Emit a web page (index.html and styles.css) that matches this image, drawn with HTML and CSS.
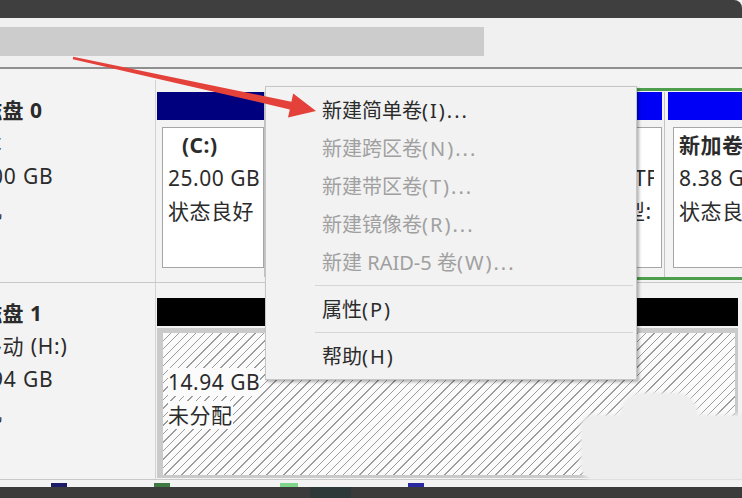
FILE: index.html
```html
<!DOCTYPE html>
<html>
<head>
    <meta charset="UTF-8">
    <title>磁盘管理</title>
    <link rel="stylesheet" href="styles.css">
</head>
<body>
    <div class="titlebar"></div>
    <div class="toolbar">
        <div class="search"></div>
    </div>

    <div class="disks">
        <!-- 磁盘 0 -->
        <div class="disk first">
            <div class="label">
                <div class="name">磁盘 0</div>
                <div>基本</div>
                <div>50.00 GB</div>
                <div>联机</div>
            </div>
            <div class="parts">
                <div class="part primary c">
                    <div class="bar"></div>
                    <div class="body">
                        <div class="inner">
                            <div class="name vol">(C:)</div>
                            <div>25.00 GB NTFS</div>
                            <div>状态良好</div>
                        </div>
                    </div>
                </div>
                <div class="part primary b">
                    <div class="bar"></div>
                    <div class="body">
                        <div class="inner"></div>
                    </div>
                </div>
                <div class="ext">
                    <div class="part logical d">
                        <div class="bar"></div>
                        <div class="body">
                            <div class="inner">
                                <div class="name">&nbsp;</div>
                                <div>9.50 GB NTFS</div>
                                <div>主分区 类型:</div>
                            </div>
                        </div>
                    </div>
                    <div class="part logical e">
                        <div class="bar"></div>
                        <div class="body">
                            <div class="inner">
                                <div class="name">新加卷 (E:)</div>
                                <div>8.38 GB NTFS</div>
                                <div>状态良好 (逻辑驱动器)</div>
                            </div>
                        </div>
                    </div>
                </div>
            </div>
        </div>

        <!-- 磁盘 1 -->
        <div class="disk second">
            <div class="label">
                <div class="name">磁盘 1</div>
                <div>可移动 (H:)</div>
                <div>14.94 GB</div>
                <div>联机</div>
            </div>
            <div class="parts">
                <div class="part free">
                    <div class="bar"></div>
                    <div class="hatch">
                        <div>&nbsp;</div>
                        <div><span>14.94 GB</span></div>
                        <div><span>未分配</span></div>
                    </div>
                </div>
            </div>
        </div>
    </div>

    <div class="legend">
        <i class="navy"></i>
        <i class="green"></i>
        <i class="lime"></i>
        <i class="blue"></i>
    </div>
    <div class="taskbar">
        <div class="task"></div>
    </div>

    <!-- 右键菜单 -->
    <div class="menu">
        <div class="item">新建简单卷<span class="key">(I)...</span></div>
        <div class="item off">新建跨区卷<span class="key">(N)...</span></div>
        <div class="item off">新建带区卷<span class="key">(T)...</span></div>
        <div class="item off">新建镜像卷<span class="key">(R)...</span></div>
        <div class="item off">新建 RAID-5 卷<span class="key">(W)...</span></div>
        <div class="sep"></div>
        <div class="item">属性<span class="key">(P)</span></div>
        <div class="sep"></div>
        <div class="item">帮助<span class="key">(H)</span></div>
    </div>

    <!-- 水印遮挡 -->
    <div class="patch wide"></div>
    <div class="patch hump"></div>

    <svg class="arrow" width="742" height="498" viewBox="0 0 742 498">
        <polygon points="72.8,59.2 289.8,109.4 288,117.4 316,111 293.2,93.6 291.4,101.8 73.2,56.8" fill="#e4413a"/>
    </svg>
</body>
</html>
```

FILE: styles.css
```css
body {
    margin: 0;
    width: 742px;
    height: 498px;
    overflow: hidden;
    position: relative;
    background-color: #f3f3f3;
    font-family: "Noto Sans", "Noto Sans CJK SC", sans-serif;
    color: #2b2b2b;
}

.titlebar {
    height: 18px;
    background-color: #3f3f3f;
    border-top-right-radius: 8px;
}

.toolbar {
    height: 51px;
    box-sizing: border-box;
    padding-top: 9px;
    background-color: #f0f0f0;
    border-bottom: 2px solid #8f8f8f;
}

.search {
    width: 484px;
    height: 29px;
    background-color: #cdcccd;
}

.disks {
    height: 410px;
    box-sizing: border-box;
    padding-top: 11px;
}

.disk {
    display: grid;
    grid-template-columns: 156px 1fr;
}

.disk.first {
    height: 203px;
    box-sizing: border-box;
    border-bottom: 1px solid #c8c8c8;
}

.disk.second {
    height: 196px;
}

.label {
    margin-left: -41px;
    padding-top: 14px;
    border-right: 1px solid #d2d2d2;
    font-size: 21px;
    line-height: 33px;
    letter-spacing: 0.8px;
    white-space: nowrap;
}

.label .name {
    font-weight: bold;
    letter-spacing: 0.5px;
    padding-left: 22px;
}

.parts {
    display: flex;
    padding-left: 1px;
    overflow: hidden;
}

.first .parts {
    padding-top: 8px;
    padding-bottom: 2px;
}

.second .parts {
    padding: 15px 4px 1px 1px;
}

.part {
    display: flex;
    flex-direction: column;
    flex: none;
    box-sizing: border-box;
    padding-right: 2px;
    border-right: 1px solid #c4c4c4;
}

.first .part.primary {
    margin: 4px 0 3px;
}

.part.c { width: 108px; padding-right: 0; }
.part.b { width: 253px; }
.part.d { width: 144px; }
.part.e { width: 200px; padding-left: 3px; }

.part .bar {
    height: 28px;
}

.primary .bar { background-color: #00007e; }
.logical .bar { background-color: #0000f6; }
.free .bar { background-color: #000; }

.part .body {
    flex: 1;
    display: flex;
    padding: 7px 0 9px 5px;
}

.inner {
    flex: 1;
    min-width: 0;
    padding: 1px 0 0 5px;
    background-color: #fff;
    border: 1px solid #a6a6a6;
    font-size: 21px;
    line-height: 33px;
    letter-spacing: 0.5px;
}

.d .inner {
    padding-right: 7px;
}

.inner > div {
    white-space: nowrap;
    overflow: hidden;
}

.inner .name {
    font-weight: bold;
}

.inner .vol {
    padding-left: 14px;
}

.ext {
    display: flex;
    flex: none;
    padding-top: 1px;
    border: 3px solid #4d9f4d;
    border-right: none;
}

.part.free {
    flex: 1;
    padding-right: 0;
    border-right: none;
}

.hatch {
    flex: 1;
    margin-top: 2px;
    padding-left: 5px;
    border: 5px solid #cacaca;
    border-left-width: 6px;
    border-right-width: 3px;
    border-bottom-width: 3px;
    background: repeating-linear-gradient(135deg, #fbfbfb 0 5px, #9c9c9c 5px 6px);
    font-size: 21px;
    line-height: 33px;
    letter-spacing: 0.5px;
}

.hatch span {
    background-color: #fbfbfb;
}

.legend {
    height: 4px;
    padding: 3px 0 0 51px;
    border-top: 1px solid #c9c9c9;
    display: grid;
    grid-template-columns: 103px 126px 128px 60px;
}

.legend i {
    display: block;
    width: 16px;
    height: 4px;
}

.legend .navy { background-color: #1b1b6a; }
.legend .green { background-color: #3f7a45; }
.legend .lime { width: 18px; background-color: #7fd58a; }
.legend .blue { background-color: #2a2aa0; }

.taskbar {
    height: 11px;
    padding-left: 310px;
    background-color: #3b3b3b;
}

.task {
    width: 41px;
    height: 11px;
    background-color: #2d3838;
}

/* 右键菜单 */
.menu {
    position: absolute;
    left: 265px;
    top: 86px;
    width: 372px;
    height: 294px;
    box-sizing: border-box;
    padding: 5px 3px 0 0;
    background-color: #f2f2f2;
    border: 1px solid #c6c6c6;
    box-shadow: 2px 2px 3px rgba(0, 0, 0, 0.3);
    font-size: 20px;
    z-index: 2;
}

.item {
    height: 38px;
    line-height: 38px;
    padding-left: 56px;
    color: #2b2b2b;
    white-space: nowrap;
}

.item.off {
    color: #a0a0a0;
}

.key {
    letter-spacing: 2px;
}

.sep {
    height: 1px;
    margin: 3px 0 5px 49px;
    background-color: #d6d6d6;
}

.patch {
    position: absolute;
    background-color: #eeeeee;
    box-shadow: 0 0 4px 2px #eeeeee;
    z-index: 1;
}

.patch.wide {
    left: 582px;
    top: 416px;
    width: 170px;
    height: 62px;
    border-radius: 12px 0 0 12px;
}

.patch.hump {
    left: 622px;
    top: 394px;
    width: 74px;
    height: 40px;
    border-radius: 20px 20px 0 0;
}

.arrow {
    position: absolute;
    left: 0;
    top: 0;
    z-index: 3;
    pointer-events: none;
}
```
